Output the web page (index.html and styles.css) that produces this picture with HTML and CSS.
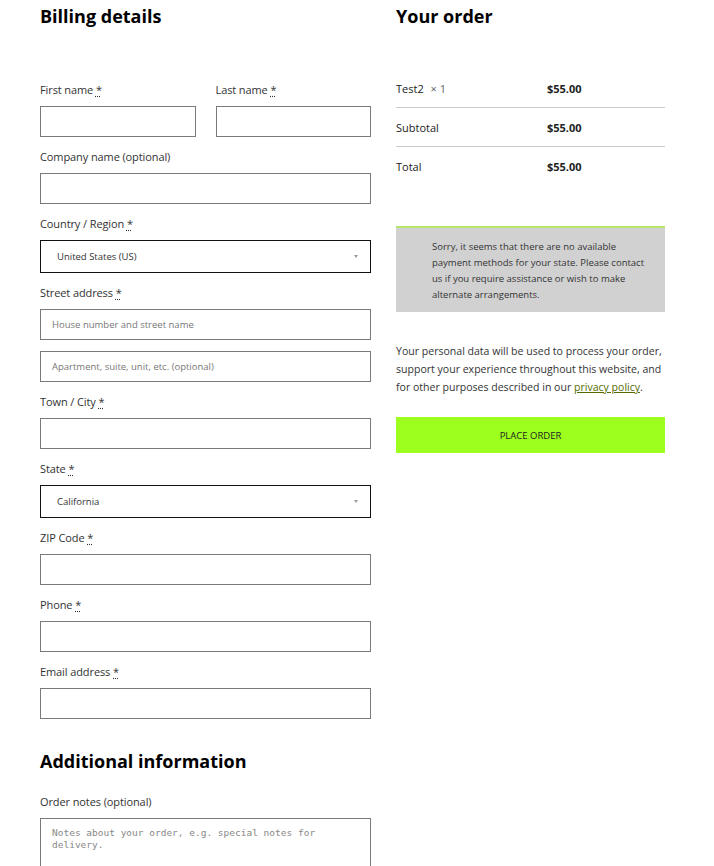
FILE: index.html
```html
<!DOCTYPE html>
<html>
<head>
  <meta charset="UTF-8" />
  <meta name="viewport" content="width=device-width, initial-scale=1.0"/>
  <title>Checkout</title>
  <link rel="stylesheet" href="styles.css">
</head>
<body>

  <div class="checkout">

    <div class="billing">
      <h3 class="section-title">Billing details</h3>

      <div class="field-row">
        <div class="field">
          <label for="firstName">First name <abbr class="required" title="required">*</abbr></label>
          <input type="text" id="firstName">
        </div>
        <div class="field">
          <label for="lastName">Last name <abbr class="required" title="required">*</abbr></label>
          <input type="text" id="lastName">
        </div>
      </div>

      <div class="field">
        <label for="company">Company name (optional)</label>
        <input type="text" id="company">
      </div>

      <div class="field">
        <label for="country">Country / Region <abbr class="required" title="required">*</abbr></label>
        <div class="select-wrap">
          <select id="country">
            <option>United States (US)</option>
          </select>
          <span class="select-arrow"></span>
        </div>
      </div>

      <div class="field">
        <label for="address1">Street address <abbr class="required" title="required">*</abbr></label>
        <input type="text" id="address1" placeholder="House number and street name">
        <input type="text" id="address2" class="second" placeholder="Apartment, suite, unit, etc. (optional)">
      </div>

      <div class="field">
        <label for="city">Town / City <abbr class="required" title="required">*</abbr></label>
        <input type="text" id="city">
      </div>

      <div class="field">
        <label for="state">State <abbr class="required" title="required">*</abbr></label>
        <div class="select-wrap">
          <select id="state">
            <option>California</option>
          </select>
          <span class="select-arrow"></span>
        </div>
      </div>

      <div class="field">
        <label for="zip">ZIP Code <abbr class="required" title="required">*</abbr></label>
        <input type="text" id="zip">
      </div>

      <div class="field">
        <label for="phone">Phone <abbr class="required" title="required">*</abbr></label>
        <input type="tel" id="phone">
      </div>

      <div class="field">
        <label for="email">Email address <abbr class="required" title="required">*</abbr></label>
        <input type="email" id="email">
      </div>

      <h3 class="section-title additional">Additional information</h3>

      <div class="field">
        <label for="notes">Order notes (optional)</label>
        <textarea id="notes" rows="4" placeholder="Notes about your order, e.g. special notes for delivery."></textarea>
      </div>
    </div>

    <div class="order">
      <h3 class="section-title">Your order</h3>

      <table class="order-table">
        <tr>
          <td>Test2 <span class="qty">&times; 1</span></td>
          <td class="amount">$55.00</td>
        </tr>
        <tr>
          <td>Subtotal</td>
          <td class="amount">$55.00</td>
        </tr>
        <tr>
          <td>Total</td>
          <td class="amount">$55.00</td>
        </tr>
      </table>

      <div class="payment-notice">
        Sorry, it seems that there are no available payment methods for your state. Please contact us if you require assistance or wish to make alternate arrangements.
      </div>

      <p class="privacy">
        Your personal data will be used to process your order, support your experience throughout this website, and for other purposes described in our <a href="#">privacy policy</a>.
      </p>

      <button type="submit" class="place-order">PLACE ORDER</button>
    </div>

  </div>

</body>
</html>
```

FILE: styles.css
```css
body {
  margin: 0;
  font-family: "Open Sans", "Noto Sans", sans-serif;
  color: #222;
  background: #fff;
}

.checkout {
  display: grid;
  grid-template-columns: 331px 269px;
  column-gap: 25px;
  padding: 0 40px;
  align-items: start;
}

.section-title {
  margin: 3px 0 53px 0;
  font-size: 18px;
  font-weight: 700;
  color: #000;
  line-height: 26px;
}

.order .section-title {
  margin-bottom: 40px;
}

.section-title.additional {
  margin: 29px 0 20px 0;
}

.field-row {
  display: grid;
  grid-template-columns: 1fr 1fr;
  column-gap: 20px;
}

.field {
  margin-bottom: 12px;
}

label {
  display: block;
  font-size: 11px;
  line-height: 16px;
  color: #333;
  margin-bottom: 8px;
  letter-spacing: -0.1px;
}

.required {
  text-decoration: underline dotted;
  text-underline-offset: 2px;
  color: #333;
}

input, textarea, select {
  width: 100%;
  box-sizing: border-box;
  font-family: "Open Sans", "Noto Sans", sans-serif;
  font-size: 9.5px;
  color: #333;
  border: 1px solid #7a7a7a;
  border-radius: 0;
  background: #fff;
  outline: none;
}

input {
  height: 31px;
  padding: 0 11px;
}

input.second {
  margin-top: 11px;
}

input::placeholder {
  color: #777;
}

.select-wrap {
  position: relative;
}

select {
  height: 33px;
  padding: 0 16px;
  border: 1px solid #111;
  -webkit-appearance: none;
  appearance: none;
  color: #333;
}

.select-arrow {
  position: absolute;
  right: 13px;
  top: 15px;
  width: 0;
  height: 0;
  border-left: 2.5px solid transparent;
  border-right: 2.5px solid transparent;
  border-top: 3px solid #999;
}

textarea {
  height: 60px;
  padding: 8px 11px;
  font-family: "DejaVu Sans Mono", "Liberation Mono", monospace;
  font-size: 9.5px;
  line-height: 12px;
  resize: none;
}

textarea::placeholder {
  color: #888;
}

.order-table {
  width: 100%;
  border-collapse: collapse;
  font-size: 11px;
}

.order-table td {
  height: 38px;
  padding: 0;
  vertical-align: middle;
  border-bottom: 1px solid #ccc;
  color: #222;
}

.order-table tr:last-child td {
  border-bottom: none;
}

.order-table td:first-child {
  width: 151px;
}

.amount {
  font-weight: 700;
  color: #111;
}

.qty {
  color: #666;
  margin-left: 4px;
}

.payment-notice {
  margin-top: 41px;
  background: #d1d1d1;
  border-top: 2px solid #b5e66b;
  padding: 11px 20px 9px 36px;
  font-size: 9.5px;
  line-height: 16px;
  color: #333;
}

.privacy {
  margin: 30px 0 0 0;
  font-size: 10.55px;
  line-height: 18px;
  color: #333;
}

.privacy a {
  color: #556b00;
  text-decoration: underline;
}

.place-order {
  display: block;
  width: 100%;
  height: 36px;
  margin-top: 21px;
  background: #9cff1e;
  border: none;
  font-family: "Open Sans", "Noto Sans", sans-serif;
  font-size: 9.5px;
  color: #222;
  cursor: pointer;
}
```
